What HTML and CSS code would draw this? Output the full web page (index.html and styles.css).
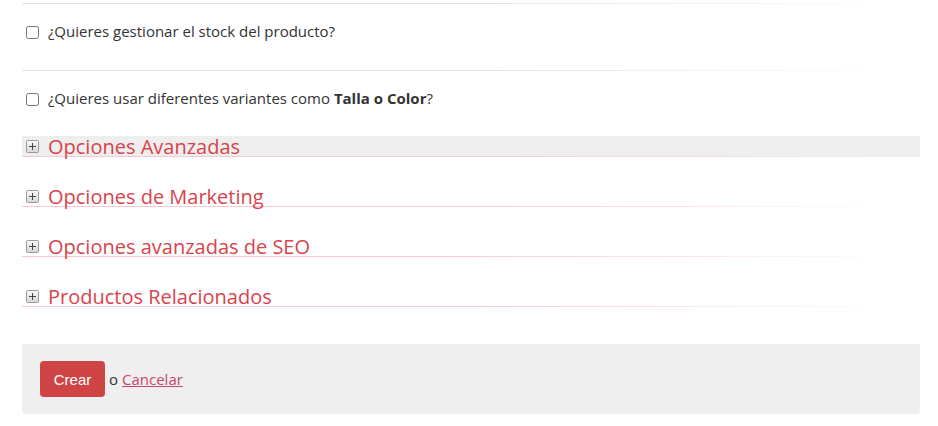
FILE: index.html
```html
<!DOCTYPE html>
<html>
<head>
    <title>Nuevo producto</title>
    <link rel="stylesheet" href="styles.css">
</head>
<body>
    <form class="product-form">
        <div class="field">
            <label><input type="checkbox"> ¿Quieres gestionar el stock del producto?</label>
        </div>
        <div class="field">
            <label><input type="checkbox"> ¿Quieres usar diferentes variantes como <b>Talla o Color</b>?</label>
        </div>

        <h3 class="section-toggle active"><span class="plus"><svg width="13" height="13" viewBox="0 0 13 13"><defs><linearGradient id="pg" x1="0" y1="0" x2="0" y2="1"><stop offset="0" stop-color="#fafafa"/><stop offset="1" stop-color="#d6d6d6"/></linearGradient></defs><rect x="0.5" y="0.5" width="12" height="12" rx="1" fill="url(#pg)" stroke="#9a9a9a"/><path d="M3 6.5h7M6.5 3v7" stroke="#444" stroke-width="1"/></svg></span>Opciones Avanzadas</h3>
        <h3 class="section-toggle"><span class="plus"><svg width="13" height="13" viewBox="0 0 13 13"><rect x="0.5" y="0.5" width="12" height="12" rx="1" fill="url(#pg)" stroke="#9a9a9a"/><path d="M3 6.5h7M6.5 3v7" stroke="#444" stroke-width="1"/></svg></span>Opciones de Marketing</h3>
        <h3 class="section-toggle"><span class="plus"><svg width="13" height="13" viewBox="0 0 13 13"><rect x="0.5" y="0.5" width="12" height="12" rx="1" fill="url(#pg)" stroke="#9a9a9a"/><path d="M3 6.5h7M6.5 3v7" stroke="#444" stroke-width="1"/></svg></span>Opciones avanzadas de SEO</h3>
        <h3 class="section-toggle"><span class="plus"><svg width="13" height="13" viewBox="0 0 13 13"><rect x="0.5" y="0.5" width="12" height="12" rx="1" fill="url(#pg)" stroke="#9a9a9a"/><path d="M3 6.5h7M6.5 3v7" stroke="#444" stroke-width="1"/></svg></span>Productos Relacionados</h3>

        <div class="form-actions">
            <button type="button" class="btn-create">Crear</button>
            <span class="or">o</span>
            <a href="#" class="cancel">Cancelar</a>
        </div>
    </form>
</body>
</html>
```

FILE: styles.css
```css
body {
    margin: 0;
    padding: 2px 18px 0 22px;
    background: #fff;
    font-family: "Open Sans", Arial, sans-serif;
    font-size: 15px;
    color: #333;
}

.product-form {
    display: flex;
    flex-direction: column;
}

.field {
    padding: 18px 0 28px;
    border-top: 1px solid transparent;
    background: linear-gradient(to right, #e4e4e4, #e4e4e4 50%, rgba(255,255,255,0) 100%) top / 100% 1px no-repeat;
}

.field + .field {
    padding-bottom: 0;
}

.field label {
    display: block;
    line-height: 20px;
}

.field input {
    width: 13px;
    height: 13px;
    margin: 0 5px 0 4px;
    vertical-align: -2px;
}

.field b {
    font-weight: 700;
}

.section-toggle {
    display: flex;
    align-items: center;
    margin: 28px 0 0;
    height: 21px;
    font-size: 20px;
    font-weight: 400;
    line-height: 20px;
    color: #d9434b;
    background: linear-gradient(to right, #f4c9cf, #f4c9cf 45%, rgba(255,255,255,0) 98%) bottom / 100% 1px no-repeat;
    cursor: pointer;
}

.section-toggle + .section-toggle {
    margin-top: 29px;
}

.section-toggle.active {
    background-color: #eee;
}

.plus {
    display: flex;
    margin: 0 9px 0 4px;
}

.form-actions {
    display: flex;
    align-items: center;
    margin-top: 37px;
    height: 70px;
    padding: 0 18px;
    background: #efefef;
    border-radius: 0 0 4px 4px;
}

.btn-create {
    width: 65px;
    height: 36px;
    background: #cf4545;
    color: #fff;
    border: none;
    border-radius: 4px;
    font-family: Arial, "Liberation Sans", sans-serif;
    font-size: 15px;
    cursor: pointer;
}

.or {
    margin: 0 4px;
}

.cancel {
    color: #c8456b;
    text-decoration: underline;
}
```
